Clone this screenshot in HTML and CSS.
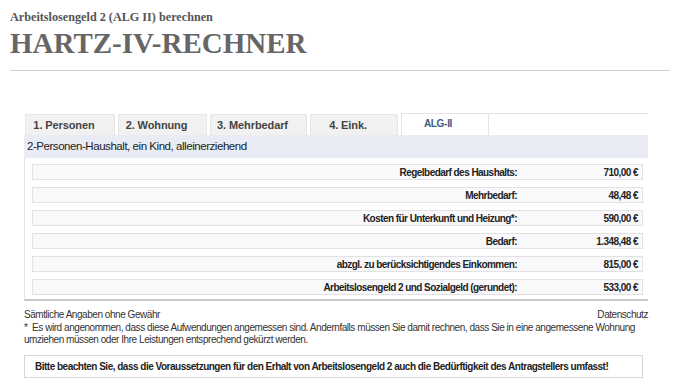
FILE: index.html
```html
<!DOCTYPE html>
<html lang="de">
<head>
<meta charset="utf-8">
<title>Hartz-IV-Rechner</title>
<link rel="stylesheet" href="styles.css">
</head>
<body>
<header class="page-head">
  <div class="subtitle">Arbeitslosengeld 2 (ALG II) berechnen</div>
  <h1 class="title">HARTZ-IV-RECHNER</h1>
</header>
<hr class="rule">
<main class="calc">
  <nav class="tabs">
    <div class="tab t1">1. Personen</div>
    <div class="tab t2">2. Wohnung</div>
    <div class="tab t3">3. Mehrbedarf</div>
    <div class="tab t4">4. Eink.</div>
    <div class="tab tab-active">ALG-II</div>
    <div class="tab-fill"></div>
  </nav>
  <div class="panel">
    <div class="panel-head">2-Personen-Haushalt, ein Kind, alleinerziehend</div>
    <div class="rows">
      <div class="row"><span class="label">Regelbedarf des Haushalts:</span><span class="value">710,00 €</span></div>
      <div class="row"><span class="label">Mehrbedarf:</span><span class="value">48,48 €</span></div>
      <div class="row"><span class="label">Kosten für Unterkunft und Heizung*:</span><span class="value">590,00 €</span></div>
      <div class="row"><span class="label">Bedarf:</span><span class="value">1.348,48 €</span></div>
      <div class="row"><span class="label">abzgl. zu berücksichtigendes Einkommen:</span><span class="value">815,00 €</span></div>
      <div class="row"><span class="label">Arbeitslosengeld 2 und Sozialgeld (gerundet):</span><span class="value">533,00 €</span></div>
    </div>
  </div>
  <div class="foot">
    <div class="foot-top"><span>Sämtliche Angaben ohne Gewähr</span><span>Datenschutz</span></div>
    <p class="note">*&nbsp; Es wird angenommen, dass diese Aufwendungen angemessen sind. Andernfalls müssen Sie damit rechnen, dass Sie in eine angemessene Wohnung umziehen müssen oder Ihre Leistungen entsprechend gekürzt werden.</p>
  </div>
  <div class="notice">Bitte beachten Sie, dass die Voraussetzungen für den Erhalt von Arbeitslosengeld 2 auch die Bedürftigkeit des Antragstellers umfasst!</div>
</main>
</body>
</html>
```

FILE: styles.css
```css
* { box-sizing: border-box; }
body {
  margin: 0;
  padding: 0 14px 0 10px;
  background: #fff;
  font-family: "Liberation Sans", Arial, sans-serif;
  color: #222;
}
.page-head { padding-top: 9px; }
.subtitle {
  font-family: "Liberation Serif", "Times New Roman", serif;
  font-weight: bold;
  font-size: 12.2px;
  line-height: 16px;
  color: #555;
}
.title {
  margin: 2px 0 0;
  font-family: "Liberation Serif", "Times New Roman", serif;
  font-weight: bold;
  font-size: 29px;
  line-height: 32px;
  color: #666;
}
.rule {
  margin: 11px 0 0;
  border: 0;
  border-top: 1px solid #d0d0d0;
}
.calc {
  margin: 42px 22px 0 14px;
  font-size: 10px;
}
.tabs {
  display: flex;
  height: 22px;
  gap: 3px;
}
.tab {
  margin-top: 1px;
  padding: 4px 12px 0 0;
  text-align: center;
  background: #f1f1f1;
  border: 1px solid #e6e6e6;
  border-bottom: 0;
  font-weight: bold;
  color: #444;
  font-size: 11px;
  letter-spacing: -0.1px;
}
.t1 { width: 90px; margin-left: 1px; }
.t2 { width: 89px; }
.t3 { width: 97px; }
.t4 { width: 88px; }
.tab-active {
  width: 88px;
  margin-top: 0;
  background: #fff;
  border: 1px solid #e4e4e4;
  border-bottom: 0;
  color: #3d5a8a;
  padding: 4px 14px 0 0;
  font-size: 10px;
  letter-spacing: -0.3px;
}
.tab-fill {
  flex: 1;
  margin-left: -3px;
  border-top: 1px solid #e4e4e4;
}
.panel {
  border-left: 1px solid #e4e4e4;
  border-bottom: 2px solid #c8c8c8;
  padding-bottom: 4px;
}
.panel-head {
  height: 23px;
  margin-left: -1px;
  padding: 5px 0 0 3px;
  background: #e9ecf4;
  font-size: 11.5px;
  letter-spacing: -0.45px;
  color: #222;
}
.rows {
  display: flex;
  flex-direction: column;
  gap: 7px;
  padding: 6px 5px 0 7px;
}
.row {
  display: flex;
  height: 16px;
  align-items: center;
  justify-content: flex-end;
  background: #f9f9fc;
  border: 1px solid #e2e2e2;
  font-weight: bold;
  color: #222;
  font-size: 10px;
  letter-spacing: -0.55px;
}
.label { padding-right: 4px; }
.value { width: 121px; text-align: right; padding-right: 4px; }
.foot {
  margin-top: 8px;
  color: #333;
  font-size: 10px;
  line-height: 12px;
  letter-spacing: -0.45px;
}
.foot-top { display: flex; justify-content: space-between; }
.note { margin: 1px 0 0; }
.notice {
  margin: 9px 5px 0 0;
  height: 23px;
  padding: 5px 0 0 10px;
  border: 1px solid #d6d6d6;
  font-weight: bold;
  font-size: 10px;
  letter-spacing: -0.5px;
  color: #222;
}
```
